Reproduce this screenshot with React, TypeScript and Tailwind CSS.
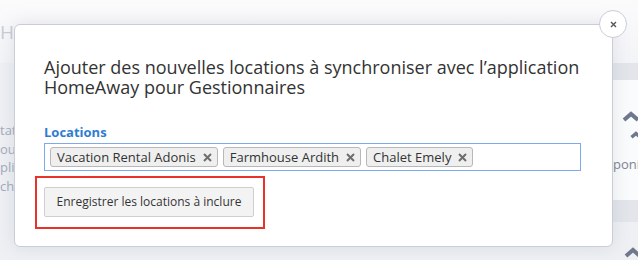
import React from "react";

const font = { fontFamily: '"Open Sans", "Noto Sans", sans-serif' };

function Tag({ label }: { label: string }) {
  return (
    <span className="flex h-[20px] items-center rounded-[3px] border border-[#b8b8b8] bg-[#efefef] pl-[6px] pr-[5px] text-[13px] leading-none text-[#333]">
      <span>{label}</span>
      <svg className="ml-[7px]" width="9" height="9" viewBox="0 0 9 9">
        <path d="M1 1L8 8M8 1L1 8" stroke="#6e6e6e" strokeWidth="2" strokeLinecap="butt" />
      </svg>
    </span>
  );
}

function Chevron({ w, h, sw }: { w: number; h: number; sw: number }) {
  return (
    <svg width={w} height={h} viewBox={`0 0 ${w} ${h}`}>
      <path
        d={`M${sw} ${h - sw / 2} L${w / 2} ${sw} L${w - sw} ${h - sw / 2}`}
        stroke="#6f788c"
        strokeWidth={sw}
        fill="none"
        strokeLinejoin="miter"
      />
    </svg>
  );
}

export default function App() {
  return (
    <div className="relative h-[260px] w-[638px] overflow-hidden bg-[#eef0f4]" style={font}>
      {/* background page */}
      <div className="flex h-full flex-col">
        <div className="flex h-[63px] items-start bg-gradient-to-b from-[#fbfbfc] to-[#f3f4f7] pt-[18px] text-[19px] text-[#c9cdd8]">
          <span className="w-[14px] overflow-hidden whitespace-nowrap">Ho</span>
        </div>
        <div className="flex flex-1">
          <div className="w-[14px] overflow-hidden bg-[#eef0f4] pt-[58px] text-[13px] leading-[18.5px] text-[#a3abbd]">
            <p className="whitespace-nowrap">tatut</p>
            <p className="whitespace-nowrap">our</p>
            <p className="whitespace-nowrap">pli</p>
            <p className="whitespace-nowrap">cha</p>
          </div>
          <div className="flex-1" />
          <div className="flex w-[26px] flex-col overflow-hidden">
            <div className="h-[17px] bg-[#e3e5eb]" />
            <div className="flex h-[120px] flex-col bg-[#fafbfc]">
              <div className="ml-[8px] mt-[30px]">
                <Chevron w={22} h={12} sw={4} />
              </div>
              <div className="ml-[16px] mt-[8px]">
                <Chevron w={16} h={9} sw={3.5} />
              </div>
              <div className="mt-[16px] whitespace-nowrap pl-[1px] text-[13px] text-[#7c8496]">
                poni
              </div>
            </div>
            <div className="h-[22px] bg-[#e3e5eb]" />
            <div className="flex-1 bg-[#eef0f3] pl-[10px] pt-[24px]">
              <Chevron w={22} h={12} sw={4} />
            </div>
          </div>
        </div>
      </div>

      {/* modal */}
      <div className="absolute left-[14px] top-[24px] h-[223px] w-[599px] rounded-[6px] border border-[#c9cdd8] bg-white px-[29px] pt-[32px] shadow-[0_0_18px_rgba(120,130,150,0.18)]">
        <h2 className="text-[18px] font-normal leading-[20px] text-[#333]">
          Ajouter des nouvelles locations à synchroniser avec l’application
          <br />
          HomeAway pour Gestionnaires
        </h2>
        <label className="mt-[26px] block text-[13px] font-bold leading-[18px] text-[#2f7dd1]">Locations</label>
        <div className="mt-[2px] flex h-[28px] w-[537px] items-center gap-[5px] border border-[#7ea9ec] bg-white pl-[5px]">
          <Tag label="Vacation Rental Adonis" />
          <Tag label="Farmhouse Ardith" />
          <Tag label="Chalet Emely" />
        </div>
        <div className="ml-[-9px] mt-[5px] inline-block border-2 border-[#e8332b] pb-[10px] pl-[7px] pr-[9px] pt-[9px]">
          <button className="flex h-[30px] w-[210px] items-center justify-center rounded-[2px] border border-[#cfcfcf] bg-[#f3f3f3] text-[12px] text-[#333]">
            Enregistrer les locations à inclure
          </button>
        </div>
      </div>

      {/* close button */}
      <button className="absolute left-[599px] top-[10px] flex h-[28px] w-[28px] items-center justify-center rounded-full border border-[#c9cdd8] bg-white">
        <svg width="7" height="7" viewBox="0 0 7 7">
          <path d="M1 1L6 6M6 1L1 6" stroke="#555" strokeWidth="1.4" />
        </svg>
      </button>
    </div>
  );
}
